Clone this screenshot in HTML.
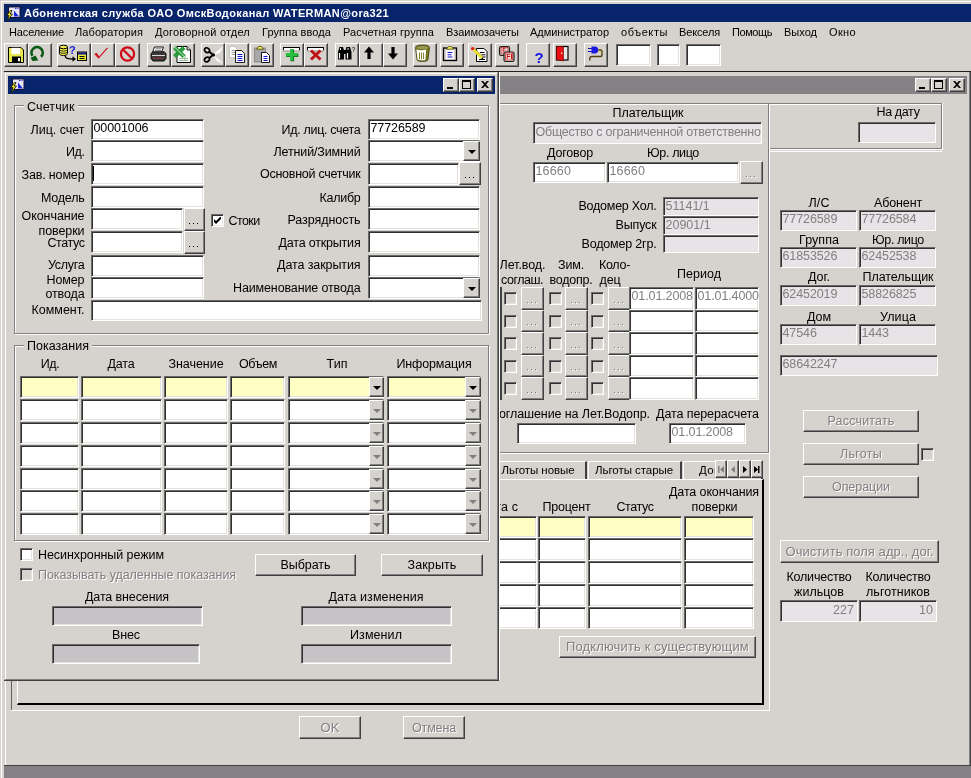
<!DOCTYPE html>
<html lang="ru"><head><meta charset="utf-8"><title>Абонентская служба</title>
<style>
html,body{margin:0;padding:0;background:#d6d3ce;}
#r{will-change:transform;position:relative;width:971px;height:778px;overflow:hidden;font-family:"Liberation Sans",sans-serif;font-size:12px;}
#r div,#r svg,#r span{position:absolute;box-sizing:border-box;}
#r span{white-space:nowrap;line-height:1;}
.sunk{border:1px solid;border-color:#6a6a6a #fff #fff #6a6a6a;box-shadow:inset 1px 1px 0 #303030, inset -1px -1px 0 #e4e2dc;}
.rais{border:1px solid;border-color:#fff #404040 #404040 #fff;box-shadow:inset -1px -1px 0 #808080, inset 1px 1px 0 #d6d3ce;}
.grp{border:1px solid #808080;box-shadow:inset 1px 1px 0 #fff, 1px 1px 0 #fff;}
.grp2{border:1px solid #fff;box-shadow:inset 1px 1px 0 #808080;border-right-color:#fff;}
</style></head>
<body><div id="r">
<div class="" style="left:0px;top:0px;width:971px;height:778px;background:#d6d3ce"></div>
<div class="" style="left:0px;top:0px;width:971px;height:1px;background:#d6d3ce"></div>
<div class="" style="left:1px;top:1px;width:970px;height:1px;background:#fff"></div>
<div class="" style="left:1px;top:1px;width:1px;height:777px;background:#fff"></div>
<div class="" style="left:4px;top:4px;width:967px;height:18px;background:#08246b"></div>
<span id="t1" style="left:24px;top:8px;font-size:11px;font-weight:700;color:#fff;letter-spacing:0.39px;">Абонентская служба ОАО ОмскВодоканал WATERMAN@ora321</span>
<span id="t2" style="left:9px;top:27px;font-size:11px;font-weight:400;color:#000;letter-spacing:-0.13px;">Население</span>
<span id="t3" style="left:75px;top:27px;font-size:11px;font-weight:400;color:#000;letter-spacing:0.09px;">Лаборатория</span>
<span id="t4" style="left:155px;top:27px;font-size:11px;font-weight:400;color:#000;letter-spacing:0.18px;">Договорной отдел</span>
<span id="t5" style="left:262px;top:27px;font-size:11px;font-weight:400;color:#000;letter-spacing:0.09px;">Группа ввода</span>
<span id="t6" style="left:343px;top:27px;font-size:11px;font-weight:400;color:#000;letter-spacing:0.08px;">Расчетная группа</span>
<span id="t7" style="left:446px;top:27px;font-size:11px;font-weight:400;color:#000;letter-spacing:-0.05px;">Взаимозачеты</span>
<span id="t8" style="left:530px;top:27px;font-size:11px;font-weight:400;color:#000;letter-spacing:-0.03px;">Администратор</span>
<span id="t9" style="left:621px;top:27px;font-size:11px;font-weight:400;color:#000;letter-spacing:0.58px;">объекты</span>
<span id="t10" style="left:679px;top:27px;font-size:11px;font-weight:400;color:#000;letter-spacing:-0.15px;">Векселя</span>
<span id="t11" style="left:732px;top:27px;font-size:11px;font-weight:400;color:#000;letter-spacing:-0.42px;">Помощь</span>
<span id="t12" style="left:784px;top:27px;font-size:11px;font-weight:400;color:#000;letter-spacing:0.02px;">Выход</span>
<span id="t13" style="left:829px;top:27px;font-size:11px;font-weight:400;color:#000;letter-spacing:0.36px;">Окно</span>
<div class="rais tbb" style="left:4px;top:43px;width:24px;height:24px;background:#d6d3ce"></div>
<div class="rais tbb" style="left:28px;top:43px;width:24px;height:24px;background:#d6d3ce"></div>
<div class="rais tbb" style="left:57px;top:43px;width:34px;height:24px;background:#d6d3ce"></div>
<div class="rais tbb" style="left:91px;top:43px;width:24px;height:24px;background:#d6d3ce"></div>
<div class="rais tbb" style="left:115px;top:43px;width:25px;height:24px;background:#d6d3ce"></div>
<div class="rais tbb" style="left:147px;top:43px;width:24px;height:24px;background:#d6d3ce"></div>
<div class="rais tbb" style="left:171px;top:43px;width:24px;height:24px;background:#d6d3ce"></div>
<div class="rais tbb" style="left:201px;top:43px;width:24px;height:24px;background:#d6d3ce"></div>
<div class="rais tbb" style="left:225px;top:43px;width:24px;height:24px;background:#d6d3ce"></div>
<div class="rais tbb" style="left:250px;top:43px;width:24px;height:24px;background:#d6d3ce"></div>
<div class="rais tbb" style="left:280px;top:43px;width:24px;height:24px;background:#d6d3ce"></div>
<div class="rais tbb" style="left:304px;top:43px;width:24px;height:24px;background:#d6d3ce"></div>
<div class="rais tbb" style="left:335px;top:43px;width:24px;height:24px;background:#d6d3ce"></div>
<div class="rais tbb" style="left:359px;top:43px;width:24px;height:24px;background:#d6d3ce"></div>
<div class="rais tbb" style="left:383px;top:43px;width:24px;height:24px;background:#d6d3ce"></div>
<div class="rais tbb" style="left:413px;top:43px;width:24px;height:24px;background:#d6d3ce"></div>
<div class="rais tbb" style="left:440px;top:43px;width:24px;height:24px;background:#d6d3ce"></div>
<div class="rais tbb" style="left:468px;top:43px;width:24px;height:24px;background:#d6d3ce"></div>
<div class="rais tbb" style="left:495px;top:43px;width:24px;height:24px;background:#d6d3ce"></div>
<div class="rais tbb" style="left:526px;top:43px;width:24px;height:24px;background:#d6d3ce"></div>
<div class="rais tbb" style="left:553px;top:43px;width:24px;height:24px;background:#d6d3ce"></div>
<div class="rais tbb" style="left:584px;top:43px;width:24px;height:24px;background:#d6d3ce"></div>
<div class="sunk" style="left:616px;top:44px;width:35px;height:22px;background:#fff"></div>
<div class="sunk" style="left:657px;top:44px;width:23px;height:22px;background:#fff"></div>
<div class="sunk" style="left:686px;top:44px;width:35px;height:22px;background:#fff"></div>
<div class="" style="left:4px;top:71px;width:967px;height:1px;background:#202020"></div>
<div class="" style="left:4px;top:765px;width:967px;height:13px;background:#848284"></div>
<div class="" style="left:4px;top:765px;width:967px;height:1px;background:#424142"></div>
<div class="" style="left:500px;top:76px;width:467px;height:18px;background:#848284"></div>
<div class="rais cap" style="left:915px;top:78px;width:16px;height:14px;background:#d6d3ce"></div>
<div class="" style="left:919px;top:87px;width:6px;height:2px;background:#000"></div>
<div class="rais cap" style="left:931px;top:78px;width:16px;height:14px;background:#d6d3ce"></div>
<div class="" style="left:934px;top:80px;width:9px;height:9px;border:1px solid #000;border-top:2px solid #000;box-sizing:border-box"></div>
<div class="rais cap" style="left:949px;top:78px;width:16px;height:14px;background:#d6d3ce"></div>
<svg style="left:953px;top:81px" width="8" height="7"><path d="M0 0h2l2 2l2-2h2l-3 3.5l3 3.5h-2l-2-2l-2 2h-2l3-3.5z" fill="#000"/></svg>
<div class="" style="left:5px;top:72px;width:1px;height:693px;background:#fff"></div>
<div class="" style="left:970px;top:72px;width:1px;height:694px;background:#424142"></div>
<div class="" style="left:969px;top:72px;width:1px;height:693px;background:#848284"></div>
<div class="grp" style="left:490px;top:103px;width:279px;height:350px;"></div>
<span id="t14" style="left:612.5px;top:107px;font-size:12.5px;font-weight:400;color:#000;letter-spacing:-0.06px;">Плательщик</span>
<div class="sunk" style="left:533px;top:122px;width:229px;height:22px;background:#e7e3e7"></div>
<span id="t15" style="left:535.5px;top:126px;font-size:12.5px;font-weight:400;color:#808080;letter-spacing:-0.24px;">Общество с ограниченной ответственно</span>
<span id="t16" style="left:547.0px;top:147px;font-size:12.5px;font-weight:400;color:#000;letter-spacing:-0.17px;">Договор</span>
<span id="t17" style="left:647.0px;top:147px;font-size:12.5px;font-weight:400;color:#000;letter-spacing:-0.35px;">Юр. лицо</span>
<div class="sunk" style="left:533px;top:162px;width:73px;height:21px;background:#fff"></div>
<span id="t18" style="left:535.5px;top:165px;font-size:12.5px;font-weight:400;color:#808080;letter-spacing:0.15px;">16660</span>
<div class="sunk" style="left:607px;top:162px;width:132px;height:21px;background:#fff"></div>
<span id="t19" style="left:609.5px;top:165px;font-size:12.5px;font-weight:400;color:#808080;letter-spacing:0.15px;">16660</span>
<div class="rais" style="left:740px;top:161px;width:23px;height:23px;background:#d6d3ce"></div>
<div class="" style="left:747px;top:177px;width:1px;height:1px;background:#fff"></div>
<div class="" style="left:746px;top:176px;width:1px;height:1px;background:#808080"></div>
<div class="" style="left:751px;top:177px;width:1px;height:1px;background:#fff"></div>
<div class="" style="left:750px;top:176px;width:1px;height:1px;background:#808080"></div>
<div class="" style="left:755px;top:177px;width:1px;height:1px;background:#fff"></div>
<div class="" style="left:754px;top:176px;width:1px;height:1px;background:#808080"></div>
<span id="t20" style="left:578.5px;top:200px;font-size:12.5px;font-weight:400;color:#000;letter-spacing:-0.24px;">Водомер Хол.</span>
<div class="sunk" style="left:663px;top:197px;width:96px;height:19px;background:#e7e3e7"></div>
<span id="t21" style="left:665.5px;top:200px;font-size:12.5px;font-weight:400;color:#808080;letter-spacing:0px;">51141/1</span>
<span id="t22" style="left:615.5px;top:219px;font-size:12.5px;font-weight:400;color:#000;letter-spacing:-0.15px;">Выпуск</span>
<div class="sunk" style="left:663px;top:216px;width:96px;height:19px;background:#e7e3e7"></div>
<span id="t23" style="left:665.5px;top:219px;font-size:12.5px;font-weight:400;color:#808080;letter-spacing:0px;">20901/1</span>
<span id="t24" style="left:581.5px;top:238px;font-size:12.5px;font-weight:400;color:#000;letter-spacing:-0.18px;">Водомер 2гр.</span>
<div class="sunk" style="left:663px;top:235px;width:96px;height:18px;background:#e7e3e7"></div>
<span id="t25" style="left:499.5px;top:259px;font-size:12.5px;font-weight:400;color:#000;letter-spacing:-0.06px;">Лет.вод.</span>
<span id="t26" style="left:501.0px;top:274px;font-size:12.5px;font-weight:400;color:#000;letter-spacing:-0.48px;">соглаш.</span>
<span id="t27" style="left:558.0px;top:259px;font-size:12.5px;font-weight:400;color:#000;letter-spacing:-0.15px;">Зим.</span>
<span id="t28" style="left:549.5px;top:274px;font-size:12.5px;font-weight:400;color:#000;letter-spacing:-0.23px;">водопр.</span>
<span id="t29" style="left:599.0px;top:259px;font-size:12.5px;font-weight:400;color:#000;letter-spacing:-0.3px;">Коло-</span>
<span id="t30" style="left:599.5px;top:274px;font-size:12.5px;font-weight:400;color:#000;letter-spacing:-0.14px;">дец</span>
<span id="t31" style="left:677.0px;top:268px;font-size:12.5px;font-weight:400;color:#000;letter-spacing:0.03px;">Период</span>
<div class="sunk" style="left:504px;top:292px;width:13px;height:13px;background:#d6d3ce"></div>
<div class="rais" style="left:521px;top:287px;width:23px;height:23px;background:#d6d3ce"></div>
<div class="" style="left:528px;top:303px;width:1px;height:1px;background:#fff"></div>
<div class="" style="left:527px;top:302px;width:1px;height:1px;background:#808080"></div>
<div class="" style="left:532px;top:303px;width:1px;height:1px;background:#fff"></div>
<div class="" style="left:531px;top:302px;width:1px;height:1px;background:#808080"></div>
<div class="" style="left:536px;top:303px;width:1px;height:1px;background:#fff"></div>
<div class="" style="left:535px;top:302px;width:1px;height:1px;background:#808080"></div>
<div class="sunk" style="left:549px;top:292px;width:13px;height:13px;background:#d6d3ce"></div>
<div class="rais" style="left:565px;top:287px;width:23px;height:23px;background:#d6d3ce"></div>
<div class="" style="left:572px;top:303px;width:1px;height:1px;background:#fff"></div>
<div class="" style="left:571px;top:302px;width:1px;height:1px;background:#808080"></div>
<div class="" style="left:576px;top:303px;width:1px;height:1px;background:#fff"></div>
<div class="" style="left:575px;top:302px;width:1px;height:1px;background:#808080"></div>
<div class="" style="left:580px;top:303px;width:1px;height:1px;background:#fff"></div>
<div class="" style="left:579px;top:302px;width:1px;height:1px;background:#808080"></div>
<div class="sunk" style="left:591px;top:292px;width:13px;height:13px;background:#d6d3ce"></div>
<div class="rais" style="left:608px;top:287px;width:23px;height:23px;background:#d6d3ce"></div>
<div class="" style="left:615px;top:303px;width:1px;height:1px;background:#fff"></div>
<div class="" style="left:614px;top:302px;width:1px;height:1px;background:#808080"></div>
<div class="" style="left:619px;top:303px;width:1px;height:1px;background:#fff"></div>
<div class="" style="left:618px;top:302px;width:1px;height:1px;background:#808080"></div>
<div class="" style="left:623px;top:303px;width:1px;height:1px;background:#fff"></div>
<div class="" style="left:622px;top:302px;width:1px;height:1px;background:#808080"></div>
<div class="sunk" style="left:629px;top:287px;width:65px;height:23px;background:#fff"></div>
<span id="t32" style="left:631.5px;top:290px;font-size:12.5px;font-weight:400;color:#808080;letter-spacing:-0.11px;">01.01.2008</span>
<div class="sunk" style="left:695px;top:287px;width:64px;height:23px;background:#fff"></div>
<span id="t33" style="left:697.5px;top:290px;font-size:12.5px;font-weight:400;color:#808080;letter-spacing:-0.11px;">01.01.4000</span>
<div class="sunk" style="left:504px;top:315px;width:13px;height:13px;background:#d6d3ce"></div>
<div class="rais" style="left:521px;top:310px;width:23px;height:22px;background:#d6d3ce"></div>
<div class="" style="left:528px;top:325px;width:1px;height:1px;background:#fff"></div>
<div class="" style="left:527px;top:324px;width:1px;height:1px;background:#808080"></div>
<div class="" style="left:532px;top:325px;width:1px;height:1px;background:#fff"></div>
<div class="" style="left:531px;top:324px;width:1px;height:1px;background:#808080"></div>
<div class="" style="left:536px;top:325px;width:1px;height:1px;background:#fff"></div>
<div class="" style="left:535px;top:324px;width:1px;height:1px;background:#808080"></div>
<div class="sunk" style="left:549px;top:315px;width:13px;height:13px;background:#d6d3ce"></div>
<div class="rais" style="left:565px;top:310px;width:23px;height:22px;background:#d6d3ce"></div>
<div class="" style="left:572px;top:325px;width:1px;height:1px;background:#fff"></div>
<div class="" style="left:571px;top:324px;width:1px;height:1px;background:#808080"></div>
<div class="" style="left:576px;top:325px;width:1px;height:1px;background:#fff"></div>
<div class="" style="left:575px;top:324px;width:1px;height:1px;background:#808080"></div>
<div class="" style="left:580px;top:325px;width:1px;height:1px;background:#fff"></div>
<div class="" style="left:579px;top:324px;width:1px;height:1px;background:#808080"></div>
<div class="sunk" style="left:591px;top:315px;width:13px;height:13px;background:#d6d3ce"></div>
<div class="rais" style="left:608px;top:310px;width:23px;height:22px;background:#d6d3ce"></div>
<div class="" style="left:615px;top:325px;width:1px;height:1px;background:#fff"></div>
<div class="" style="left:614px;top:324px;width:1px;height:1px;background:#808080"></div>
<div class="" style="left:619px;top:325px;width:1px;height:1px;background:#fff"></div>
<div class="" style="left:618px;top:324px;width:1px;height:1px;background:#808080"></div>
<div class="" style="left:623px;top:325px;width:1px;height:1px;background:#fff"></div>
<div class="" style="left:622px;top:324px;width:1px;height:1px;background:#808080"></div>
<div class="sunk" style="left:629px;top:310px;width:65px;height:22px;background:#fff"></div>
<div class="sunk" style="left:695px;top:310px;width:64px;height:22px;background:#fff"></div>
<div class="sunk" style="left:504px;top:337px;width:13px;height:13px;background:#d6d3ce"></div>
<div class="rais" style="left:521px;top:332px;width:23px;height:23px;background:#d6d3ce"></div>
<div class="" style="left:528px;top:348px;width:1px;height:1px;background:#fff"></div>
<div class="" style="left:527px;top:347px;width:1px;height:1px;background:#808080"></div>
<div class="" style="left:532px;top:348px;width:1px;height:1px;background:#fff"></div>
<div class="" style="left:531px;top:347px;width:1px;height:1px;background:#808080"></div>
<div class="" style="left:536px;top:348px;width:1px;height:1px;background:#fff"></div>
<div class="" style="left:535px;top:347px;width:1px;height:1px;background:#808080"></div>
<div class="sunk" style="left:549px;top:337px;width:13px;height:13px;background:#d6d3ce"></div>
<div class="rais" style="left:565px;top:332px;width:23px;height:23px;background:#d6d3ce"></div>
<div class="" style="left:572px;top:348px;width:1px;height:1px;background:#fff"></div>
<div class="" style="left:571px;top:347px;width:1px;height:1px;background:#808080"></div>
<div class="" style="left:576px;top:348px;width:1px;height:1px;background:#fff"></div>
<div class="" style="left:575px;top:347px;width:1px;height:1px;background:#808080"></div>
<div class="" style="left:580px;top:348px;width:1px;height:1px;background:#fff"></div>
<div class="" style="left:579px;top:347px;width:1px;height:1px;background:#808080"></div>
<div class="sunk" style="left:591px;top:337px;width:13px;height:13px;background:#d6d3ce"></div>
<div class="rais" style="left:608px;top:332px;width:23px;height:23px;background:#d6d3ce"></div>
<div class="" style="left:615px;top:348px;width:1px;height:1px;background:#fff"></div>
<div class="" style="left:614px;top:347px;width:1px;height:1px;background:#808080"></div>
<div class="" style="left:619px;top:348px;width:1px;height:1px;background:#fff"></div>
<div class="" style="left:618px;top:347px;width:1px;height:1px;background:#808080"></div>
<div class="" style="left:623px;top:348px;width:1px;height:1px;background:#fff"></div>
<div class="" style="left:622px;top:347px;width:1px;height:1px;background:#808080"></div>
<div class="sunk" style="left:629px;top:332px;width:65px;height:23px;background:#fff"></div>
<div class="sunk" style="left:695px;top:332px;width:64px;height:23px;background:#fff"></div>
<div class="sunk" style="left:504px;top:360px;width:13px;height:13px;background:#d6d3ce"></div>
<div class="rais" style="left:521px;top:355px;width:23px;height:22px;background:#d6d3ce"></div>
<div class="" style="left:528px;top:370px;width:1px;height:1px;background:#fff"></div>
<div class="" style="left:527px;top:369px;width:1px;height:1px;background:#808080"></div>
<div class="" style="left:532px;top:370px;width:1px;height:1px;background:#fff"></div>
<div class="" style="left:531px;top:369px;width:1px;height:1px;background:#808080"></div>
<div class="" style="left:536px;top:370px;width:1px;height:1px;background:#fff"></div>
<div class="" style="left:535px;top:369px;width:1px;height:1px;background:#808080"></div>
<div class="sunk" style="left:549px;top:360px;width:13px;height:13px;background:#d6d3ce"></div>
<div class="rais" style="left:565px;top:355px;width:23px;height:22px;background:#d6d3ce"></div>
<div class="" style="left:572px;top:370px;width:1px;height:1px;background:#fff"></div>
<div class="" style="left:571px;top:369px;width:1px;height:1px;background:#808080"></div>
<div class="" style="left:576px;top:370px;width:1px;height:1px;background:#fff"></div>
<div class="" style="left:575px;top:369px;width:1px;height:1px;background:#808080"></div>
<div class="" style="left:580px;top:370px;width:1px;height:1px;background:#fff"></div>
<div class="" style="left:579px;top:369px;width:1px;height:1px;background:#808080"></div>
<div class="sunk" style="left:591px;top:360px;width:13px;height:13px;background:#d6d3ce"></div>
<div class="rais" style="left:608px;top:355px;width:23px;height:22px;background:#d6d3ce"></div>
<div class="" style="left:615px;top:370px;width:1px;height:1px;background:#fff"></div>
<div class="" style="left:614px;top:369px;width:1px;height:1px;background:#808080"></div>
<div class="" style="left:619px;top:370px;width:1px;height:1px;background:#fff"></div>
<div class="" style="left:618px;top:369px;width:1px;height:1px;background:#808080"></div>
<div class="" style="left:623px;top:370px;width:1px;height:1px;background:#fff"></div>
<div class="" style="left:622px;top:369px;width:1px;height:1px;background:#808080"></div>
<div class="sunk" style="left:629px;top:355px;width:65px;height:22px;background:#fff"></div>
<div class="sunk" style="left:695px;top:355px;width:64px;height:22px;background:#fff"></div>
<div class="sunk" style="left:504px;top:382px;width:13px;height:13px;background:#d6d3ce"></div>
<div class="rais" style="left:521px;top:377px;width:23px;height:23px;background:#d6d3ce"></div>
<div class="" style="left:528px;top:393px;width:1px;height:1px;background:#fff"></div>
<div class="" style="left:527px;top:392px;width:1px;height:1px;background:#808080"></div>
<div class="" style="left:532px;top:393px;width:1px;height:1px;background:#fff"></div>
<div class="" style="left:531px;top:392px;width:1px;height:1px;background:#808080"></div>
<div class="" style="left:536px;top:393px;width:1px;height:1px;background:#fff"></div>
<div class="" style="left:535px;top:392px;width:1px;height:1px;background:#808080"></div>
<div class="sunk" style="left:549px;top:382px;width:13px;height:13px;background:#d6d3ce"></div>
<div class="rais" style="left:565px;top:377px;width:23px;height:23px;background:#d6d3ce"></div>
<div class="" style="left:572px;top:393px;width:1px;height:1px;background:#fff"></div>
<div class="" style="left:571px;top:392px;width:1px;height:1px;background:#808080"></div>
<div class="" style="left:576px;top:393px;width:1px;height:1px;background:#fff"></div>
<div class="" style="left:575px;top:392px;width:1px;height:1px;background:#808080"></div>
<div class="" style="left:580px;top:393px;width:1px;height:1px;background:#fff"></div>
<div class="" style="left:579px;top:392px;width:1px;height:1px;background:#808080"></div>
<div class="sunk" style="left:591px;top:382px;width:13px;height:13px;background:#d6d3ce"></div>
<div class="rais" style="left:608px;top:377px;width:23px;height:23px;background:#d6d3ce"></div>
<div class="" style="left:615px;top:393px;width:1px;height:1px;background:#fff"></div>
<div class="" style="left:614px;top:392px;width:1px;height:1px;background:#808080"></div>
<div class="" style="left:619px;top:393px;width:1px;height:1px;background:#fff"></div>
<div class="" style="left:618px;top:392px;width:1px;height:1px;background:#808080"></div>
<div class="" style="left:623px;top:393px;width:1px;height:1px;background:#fff"></div>
<div class="" style="left:622px;top:392px;width:1px;height:1px;background:#808080"></div>
<div class="sunk" style="left:629px;top:377px;width:65px;height:23px;background:#fff"></div>
<div class="sunk" style="left:695px;top:377px;width:64px;height:23px;background:#fff"></div>
<div class="" style="left:500px;top:287px;width:2px;height:113px;background:#404040"></div>
<span id="t34" style="left:490px;top:408px;font-size:12.5px;font-weight:400;color:#000;letter-spacing:-0.09px;">Соглашение на Лет.Водопр.</span>
<span id="t35" style="left:656px;top:408px;font-size:12.5px;font-weight:400;color:#000;letter-spacing:-0.09px;">Дата перерасчета</span>
<div class="sunk" style="left:517px;top:423px;width:119px;height:21px;background:#fff"></div>
<div class="sunk" style="left:669px;top:423px;width:77px;height:21px;background:#fff"></div>
<span id="t36" style="left:671.5px;top:426px;font-size:12.5px;font-weight:400;color:#808080;letter-spacing:-0.11px;">01.01.2008</span>
<div class="" style="left:17px;top:479px;width:747px;height:226px;border:1px solid #fff;border-right:2px solid #000;border-bottom:2px solid #000;box-sizing:border-box"></div>
<div class="" style="left:491px;top:461px;width:96px;height:18px;background:#d6d3ce;border-top:1px solid #fff;border-left:1px solid #fff;border-right:2px solid #404040;box-sizing:border-box"></div>
<span id="t37" style="left:501.5px;top:465px;font-size:11.5px;font-weight:400;color:#000;letter-spacing:-0.07px;">Льготы новые</span>
<div class="" style="left:588px;top:461px;width:94px;height:18px;background:#d6d3ce;border-top:1px solid #fff;border-left:1px solid #fff;border-right:2px solid #404040;box-sizing:border-box"></div>
<span id="t38" style="left:595.0px;top:465px;font-size:11.5px;font-weight:400;color:#000;letter-spacing:-0.05px;">Льготы старые</span>
<div class="" style="left:683px;top:461px;width:80px;height:18px;background:#d6d3ce;border-top:1px solid #fff;border-left:1px solid #fff;border-right:2px solid #404040;box-sizing:border-box"></div>
<span id="t39" style="left:699.0px;top:465px;font-size:11.5px;font-weight:400;color:#000;letter-spacing:0.37px;">Договор</span>
<div class="rais nav" style="left:715px;top:460px;width:12px;height:18px;background:#d6d3ce"></div>
<div class="rais nav" style="left:727px;top:460px;width:12px;height:18px;background:#d6d3ce"></div>
<div class="rais nav" style="left:739px;top:460px;width:12px;height:18px;background:#d6d3ce"></div>
<div class="rais nav" style="left:751px;top:460px;width:12px;height:18px;background:#d6d3ce"></div>
<svg style="left:715px;top:461px" width="48" height="17"><g fill="#808080"><path d="M3 5h1.5v7H3zM9 5v7L5 8.5z"/><path d="M20 5v7L16 8.5z"/></g><g fill="#000"><path d="M28 5v7L32 8.5z"/><path d="M39 5v7L43 8.5zM43 5h1.5v7H43z"/></g></svg>
<span id="t40" style="left:669.0px;top:486px;font-size:12.5px;font-weight:400;color:#000;letter-spacing:-0.12px;">Дата окончания</span>
<span id="t41" style="left:691.5px;top:501px;font-size:12.5px;font-weight:400;color:#000;letter-spacing:-0.08px;">поверки</span>
<span id="t42" style="left:480px;top:501px;font-size:12.5px;font-weight:400;color:#000;letter-spacing:0.1px;">Дата с</span>
<span id="t43" style="left:542.5px;top:501px;font-size:12.5px;font-weight:400;color:#000;letter-spacing:-0.21px;">Процент</span>
<span id="t44" style="left:616.5px;top:501px;font-size:12.5px;font-weight:400;color:#000;letter-spacing:-0.42px;">Статус</span>
<div class="sunk" style="left:440px;top:516px;width:97px;height:22px;background:#ffffc4"></div>
<div class="sunk" style="left:538px;top:516px;width:48px;height:22px;background:#ffffc4"></div>
<div class="sunk" style="left:588px;top:516px;width:94px;height:22px;background:#ffffc4"></div>
<div class="sunk" style="left:684px;top:516px;width:70px;height:22px;background:#ffffc4"></div>
<div class="sunk" style="left:440px;top:538px;width:97px;height:23px;background:#fff"></div>
<div class="sunk" style="left:538px;top:538px;width:48px;height:23px;background:#fff"></div>
<div class="sunk" style="left:588px;top:538px;width:94px;height:23px;background:#fff"></div>
<div class="sunk" style="left:684px;top:538px;width:70px;height:23px;background:#fff"></div>
<div class="sunk" style="left:440px;top:561px;width:97px;height:23px;background:#fff"></div>
<div class="sunk" style="left:538px;top:561px;width:48px;height:23px;background:#fff"></div>
<div class="sunk" style="left:588px;top:561px;width:94px;height:23px;background:#fff"></div>
<div class="sunk" style="left:684px;top:561px;width:70px;height:23px;background:#fff"></div>
<div class="sunk" style="left:440px;top:584px;width:97px;height:23px;background:#fff"></div>
<div class="sunk" style="left:538px;top:584px;width:48px;height:23px;background:#fff"></div>
<div class="sunk" style="left:588px;top:584px;width:94px;height:23px;background:#fff"></div>
<div class="sunk" style="left:684px;top:584px;width:70px;height:23px;background:#fff"></div>
<div class="sunk" style="left:440px;top:607px;width:97px;height:22px;background:#fff"></div>
<div class="sunk" style="left:538px;top:607px;width:48px;height:22px;background:#fff"></div>
<div class="sunk" style="left:588px;top:607px;width:94px;height:22px;background:#fff"></div>
<div class="sunk" style="left:684px;top:607px;width:70px;height:22px;background:#fff"></div>
<div class="rais" style="left:559px;top:636px;width:197px;height:22px;background:#d6d3ce"></div>
<span id="t45" style="left:566.0px;top:640.0px;font-size:13px;font-weight:400;color:#808080;letter-spacing:0.14px;text-shadow:1px 1px 0 #fff;">Подключить к существующим</span>
<div class="" style="left:11px;top:710px;width:759px;height:1px;background:#fff"></div>
<div class="" style="left:11px;top:680px;width:1px;height:30px;background:#606060"></div>
<div class="rais" style="left:299px;top:716px;width:62px;height:23px;background:#d6d3ce"></div>
<span id="t46" style="left:320.5px;top:720.5px;font-size:13px;font-weight:400;color:#808080;letter-spacing:0.1px;text-shadow:1px 1px 0 #fff;">OK</span>
<div class="rais" style="left:403px;top:716px;width:62px;height:23px;background:#d6d3ce"></div>
<span id="t47" style="left:412.0px;top:721.5px;font-size:12.5px;font-weight:400;color:#808080;letter-spacing:-0.14px;text-shadow:1px 1px 0 #fff;">Отмена</span>
<div class="" style="left:769px;top:103px;width:173px;height:1px;background:#808080"></div>
<div class="" style="left:769px;top:104px;width:174px;height:1px;background:#fff"></div>
<div class="" style="left:941px;top:104px;width:1px;height:45px;background:#808080"></div>
<div class="" style="left:942px;top:103px;width:1px;height:47px;background:#fff"></div>
<div class="" style="left:770px;top:148px;width:172px;height:1px;background:#808080"></div>
<div class="" style="left:769px;top:149px;width:174px;height:1px;background:#fff"></div>
<div class="" style="left:770px;top:151px;width:172px;height:1px;background:#fff"></div>
<div class="" style="left:769px;top:104px;width:1px;height:607px;background:#fff"></div>
<span id="t48" style="left:876.5px;top:106px;font-size:12.5px;font-weight:400;color:#000;letter-spacing:-0.36px;">На дату</span>
<div class="sunk" style="left:858px;top:122px;width:78px;height:21px;background:#e7e3e7"></div>
<span id="t49" style="left:808.5px;top:197px;font-size:12.5px;font-weight:400;color:#000;letter-spacing:0.1px;">Л/С</span>
<span id="t50" style="left:874.0px;top:197px;font-size:12.5px;font-weight:400;color:#000;letter-spacing:-0.13px;">Абонент</span>
<div class="sunk" style="left:780px;top:210px;width:77px;height:21px;background:#e7e3e7"></div>
<span id="t51" style="left:782.5px;top:213px;font-size:12.5px;font-weight:400;color:#808080;letter-spacing:-0.1px;">77726589</span>
<div class="sunk" style="left:859px;top:210px;width:77px;height:21px;background:#e7e3e7"></div>
<span id="t52" style="left:861.5px;top:213px;font-size:12.5px;font-weight:400;color:#808080;letter-spacing:-0.1px;">77726584</span>
<span id="t53" style="left:799.0px;top:234px;font-size:12.5px;font-weight:400;color:#000;letter-spacing:0.06px;">Группа</span>
<span id="t54" style="left:872.0px;top:234px;font-size:12.5px;font-weight:400;color:#000;letter-spacing:-0.35px;">Юр. лицо</span>
<div class="sunk" style="left:780px;top:247px;width:77px;height:21px;background:#e7e3e7"></div>
<span id="t55" style="left:782.5px;top:250px;font-size:12.5px;font-weight:400;color:#808080;letter-spacing:-0.1px;">61853526</span>
<div class="sunk" style="left:859px;top:247px;width:77px;height:21px;background:#e7e3e7"></div>
<span id="t56" style="left:861.5px;top:250px;font-size:12.5px;font-weight:400;color:#808080;letter-spacing:-0.1px;">62452538</span>
<span id="t57" style="left:808.0px;top:271px;font-size:12.5px;font-weight:400;color:#000;letter-spacing:-0.02px;">Дог.</span>
<span id="t58" style="left:862.5px;top:271px;font-size:12.5px;font-weight:400;color:#000;letter-spacing:-0.06px;">Плательщик</span>
<div class="sunk" style="left:780px;top:285px;width:77px;height:21px;background:#e7e3e7"></div>
<span id="t59" style="left:782.5px;top:288px;font-size:12.5px;font-weight:400;color:#808080;letter-spacing:-0.1px;">62452019</span>
<div class="sunk" style="left:859px;top:285px;width:77px;height:21px;background:#e7e3e7"></div>
<span id="t60" style="left:861.5px;top:288px;font-size:12.5px;font-weight:400;color:#808080;letter-spacing:-0.1px;">58826825</span>
<span id="t61" style="left:807.0px;top:311px;font-size:12.5px;font-weight:400;color:#000;letter-spacing:-0.05px;">Дом</span>
<span id="t62" style="left:880.0px;top:311px;font-size:12.5px;font-weight:400;color:#000;letter-spacing:0.1px;">Улица</span>
<div class="sunk" style="left:780px;top:324px;width:77px;height:21px;background:#e7e3e7"></div>
<span id="t63" style="left:782.5px;top:327px;font-size:12.5px;font-weight:400;color:#808080;letter-spacing:-0.1px;">47546</span>
<div class="sunk" style="left:859px;top:324px;width:77px;height:21px;background:#e7e3e7"></div>
<span id="t64" style="left:861.5px;top:327px;font-size:12.5px;font-weight:400;color:#808080;letter-spacing:-0.1px;">1443</span>
<div class="sunk" style="left:780px;top:355px;width:158px;height:21px;background:#e7e3e7"></div>
<span id="t65" style="left:782.5px;top:358px;font-size:12.5px;font-weight:400;color:#808080;letter-spacing:-0.08px;">68642247</span>
<div class="rais" style="left:803px;top:410px;width:116px;height:22px;background:#d6d3ce"></div>
<span id="t66" style="left:827.5px;top:415.0px;font-size:12.5px;font-weight:400;color:#808080;letter-spacing:0.18px;text-shadow:1px 1px 0 #fff;">Рассчитать</span>
<div class="rais" style="left:803px;top:443px;width:116px;height:22px;background:#d6d3ce"></div>
<span id="t67" style="left:840.0px;top:448.0px;font-size:12.5px;font-weight:400;color:#808080;letter-spacing:0.27px;text-shadow:1px 1px 0 #fff;">Льготы</span>
<div class="sunk" style="left:921px;top:448px;width:13px;height:13px;background:#d6d3ce"></div>
<div class="rais" style="left:803px;top:476px;width:116px;height:22px;background:#d6d3ce"></div>
<span id="t68" style="left:832.0px;top:481.0px;font-size:12.5px;font-weight:400;color:#808080;letter-spacing:-0.06px;text-shadow:1px 1px 0 #fff;">Операции</span>
<div class="rais" style="left:780px;top:540px;width:159px;height:23px;background:#d6d3ce"></div>
<span id="t69" style="left:785.5px;top:544.5px;font-size:13px;font-weight:400;color:#808080;letter-spacing:0.05px;text-shadow:1px 1px 0 #fff;">Очистить поля адр., дог.</span>
<span id="t70" style="left:786.5px;top:571px;font-size:12.5px;font-weight:400;color:#000;letter-spacing:-0.21px;">Количество</span>
<span id="t71" style="left:794.0px;top:586px;font-size:12.5px;font-weight:400;color:#000;letter-spacing:0.03px;">жильцов</span>
<span id="t72" style="left:865.5px;top:571px;font-size:12.5px;font-weight:400;color:#000;letter-spacing:-0.21px;">Количество</span>
<span id="t73" style="left:866.0px;top:586px;font-size:12.5px;font-weight:400;color:#000;letter-spacing:0.04px;">льготников</span>
<div class="sunk" style="left:780px;top:600px;width:78px;height:22px;background:#e7e3e7"></div>
<span id="t74" style="left:833.1px;top:604px;font-size:12.5px;font-weight:400;color:#808080;letter-spacing:0px;">227</span>
<div class="sunk" style="left:859px;top:600px;width:78px;height:22px;background:#e7e3e7"></div>
<span id="t75" style="left:919.1px;top:604px;font-size:12.5px;font-weight:400;color:#808080;letter-spacing:0px;">10</span>
<div class="" style="left:4px;top:72px;width:495px;height:609px;background:#d6d3ce"></div>
<div class="" style="left:4px;top:72px;width:494px;height:1px;background:#d6d3ce"></div>
<div class="" style="left:5px;top:73px;width:492px;height:1px;background:#fff"></div>
<div class="" style="left:5px;top:73px;width:1px;height:606px;background:#fff"></div>
<div class="" style="left:498px;top:72px;width:1px;height:609px;background:#404040"></div>
<div class="" style="left:497px;top:73px;width:1px;height:607px;background:#808080"></div>
<div class="" style="left:4px;top:680px;width:495px;height:1px;background:#404040"></div>
<div class="" style="left:5px;top:679px;width:493px;height:1px;background:#808080"></div>
<div class="" style="left:499px;top:72px;width:1px;height:608px;background:#fff"></div>
<div class="" style="left:8px;top:76px;width:487px;height:18px;background:#08246b"></div>
<div class="rais cap" style="left:443px;top:78px;width:16px;height:14px;background:#d6d3ce"></div>
<div class="" style="left:447px;top:87px;width:6px;height:2px;background:#000"></div>
<div class="rais cap" style="left:459px;top:78px;width:16px;height:14px;background:#d6d3ce"></div>
<div class="" style="left:462px;top:80px;width:9px;height:9px;border:1px solid #000;border-top:2px solid #000;box-sizing:border-box"></div>
<div class="rais cap" style="left:477px;top:78px;width:16px;height:14px;background:#d6d3ce"></div>
<svg style="left:481px;top:81px" width="8" height="7"><path d="M0 0h2l2 2l2-2h2l-3 3.5l3 3.5h-2l-2-2l-2 2h-2l3-3.5z" fill="#000"/></svg>
<div class="grp" style="left:14px;top:105px;width:475px;height:229px;"></div>
<div class="" style="left:24px;top:103px;width:53.5px;height:5px;background:#d6d3ce"></div>
<span id="t76" style="left:27px;top:101px;font-size:12.5px;font-weight:400;color:#000;letter-spacing:0.12px;">Счетчик</span>
<span id="t77" style="left:30.5px;top:124px;font-size:12.5px;font-weight:400;color:#000;letter-spacing:-0.02px;">Лиц. счет</span>
<span id="t78" style="left:66.0px;top:146px;font-size:12.5px;font-weight:400;color:#000;letter-spacing:-0.42px;">Ид.</span>
<span id="t79" style="left:21.5px;top:169px;font-size:12.5px;font-weight:400;color:#000;letter-spacing:-0.15px;">Зав. номер</span>
<span id="t80" style="left:41.0px;top:192px;font-size:12.5px;font-weight:400;color:#000;letter-spacing:-0.23px;">Модель</span>
<span id="t81" style="left:21.5px;top:210px;font-size:12.5px;font-weight:400;color:#000;letter-spacing:-0.06px;">Окончание</span>
<span id="t82" style="left:38.5px;top:225px;font-size:12.5px;font-weight:400;color:#000;letter-spacing:-0.08px;">поверки</span>
<span id="t83" style="left:47.5px;top:237px;font-size:12.5px;font-weight:400;color:#000;letter-spacing:-0.42px;">Статус</span>
<span id="t84" style="left:48.0px;top:259px;font-size:12.5px;font-weight:400;color:#000;letter-spacing:-0.27px;">Услуга</span>
<span id="t85" style="left:46.5px;top:274px;font-size:12.5px;font-weight:400;color:#000;letter-spacing:-0.1px;">Номер</span>
<span id="t86" style="left:45.5px;top:288px;font-size:12.5px;font-weight:400;color:#000;letter-spacing:-0.14px;">отвода</span>
<span id="t87" style="left:31.5px;top:304px;font-size:12.5px;font-weight:400;color:#000;letter-spacing:-0.01px;">Коммент.</span>
<div class="sunk" style="left:91px;top:119px;width:113px;height:21px;background:#fff"></div>
<span id="t88" style="left:93.5px;top:122px;font-size:12.5px;font-weight:400;color:#000;letter-spacing:-0.08px;">00001006</span>
<div class="sunk" style="left:91px;top:140px;width:113px;height:22px;background:#fff"></div>
<div class="sunk" style="left:91px;top:163px;width:113px;height:22px;background:#fff"></div>
<div class="sunk" style="left:91px;top:186px;width:113px;height:22px;background:#fff"></div>
<div class="sunk" style="left:91px;top:255px;width:113px;height:22px;background:#fff"></div>
<div class="sunk" style="left:91px;top:277px;width:113px;height:22px;background:#fff"></div>
<div class="" style="left:93px;top:166px;width:1px;height:15px;background:#000"></div>
<div class="sunk" style="left:91px;top:208px;width:92px;height:22px;background:#fff"></div>
<div class="rais" style="left:184px;top:208px;width:21px;height:23px;background:#d6d3ce"></div>
<div class="" style="left:189px;top:223px;width:1px;height:1px;background:#000"></div>
<div class="" style="left:193px;top:223px;width:1px;height:1px;background:#000"></div>
<div class="" style="left:197px;top:223px;width:1px;height:1px;background:#000"></div>
<div class="sunk" style="left:91px;top:231px;width:92px;height:22px;background:#fff"></div>
<div class="rais" style="left:184px;top:231px;width:21px;height:23px;background:#d6d3ce"></div>
<div class="" style="left:189px;top:246px;width:1px;height:1px;background:#000"></div>
<div class="" style="left:193px;top:246px;width:1px;height:1px;background:#000"></div>
<div class="" style="left:197px;top:246px;width:1px;height:1px;background:#000"></div>
<div class="sunk" style="left:91px;top:300px;width:391px;height:21px;background:#fff"></div>
<div class="sunk" style="left:211px;top:214px;width:13px;height:13px;background:#fff"></div>
<svg style="left:214px;top:217px" width="7" height="7"><path d="M0 2v3l2 2l5-5v-3l-5 5z" fill="#000"/></svg>
<span id="t89" style="left:228.6px;top:215px;font-size:12.5px;font-weight:400;color:#000;letter-spacing:-0.6px;">Стоки</span>
<span id="t90" style="left:281.5px;top:124px;font-size:12.5px;font-weight:400;color:#000;letter-spacing:-0.31px;">Ид. лиц. счета</span>
<span id="t91" style="left:273.5px;top:146px;font-size:12.5px;font-weight:400;color:#000;letter-spacing:-0.14px;">Летний/Зимний</span>
<span id="t92" style="left:260.0px;top:168px;font-size:12.5px;font-weight:400;color:#000;letter-spacing:-0.26px;">Основной счетчик</span>
<span id="t93" style="left:319.5px;top:192px;font-size:12.5px;font-weight:400;color:#000;letter-spacing:-0.27px;">Калибр</span>
<span id="t94" style="left:287.5px;top:214px;font-size:12.5px;font-weight:400;color:#000;letter-spacing:-0.06px;">Разрядность</span>
<span id="t95" style="left:278.5px;top:237px;font-size:12.5px;font-weight:400;color:#000;letter-spacing:-0.19px;">Дата открытия</span>
<span id="t96" style="left:277.0px;top:259px;font-size:12.5px;font-weight:400;color:#000;letter-spacing:-0.09px;">Дата закрытия</span>
<span id="t97" style="left:233.0px;top:282px;font-size:12.5px;font-weight:400;color:#000;letter-spacing:-0.13px;">Наименование отвода</span>
<div class="sunk" style="left:368px;top:119px;width:112px;height:21px;background:#fff"></div>
<span id="t98" style="left:370.5px;top:122px;font-size:12.5px;font-weight:400;color:#000;letter-spacing:-0.08px;">77726589</span>
<div class="sunk" style="left:368px;top:140px;width:112px;height:22px;background:#fff"></div>
<div class="rais" style="left:463px;top:141px;width:17px;height:20px;background:#d6d3ce"></div>
<svg style="left:467.5px;top:149.5px" width="8" height="4"><path d="M0 0H8L4 4Z" fill="#000"/></svg>
<div class="sunk" style="left:368px;top:163px;width:91px;height:22px;background:#fff"></div>
<div class="rais" style="left:459px;top:162px;width:22px;height:23px;background:#d6d3ce"></div>
<div class="" style="left:465px;top:177px;width:1px;height:1px;background:#000"></div>
<div class="" style="left:469px;top:177px;width:1px;height:1px;background:#000"></div>
<div class="" style="left:473px;top:177px;width:1px;height:1px;background:#000"></div>
<div class="sunk" style="left:368px;top:186px;width:112px;height:22px;background:#fff"></div>
<div class="sunk" style="left:368px;top:208px;width:112px;height:22px;background:#fff"></div>
<div class="sunk" style="left:368px;top:231px;width:112px;height:22px;background:#fff"></div>
<div class="sunk" style="left:368px;top:255px;width:112px;height:22px;background:#fff"></div>
<div class="sunk" style="left:368px;top:277px;width:112px;height:22px;background:#fff"></div>
<div class="rais" style="left:463px;top:278px;width:17px;height:20px;background:#d6d3ce"></div>
<svg style="left:467.5px;top:286.5px" width="8" height="4"><path d="M0 0H8L4 4Z" fill="#000"/></svg>
<div class="grp" style="left:14px;top:345px;width:475px;height:196px;"></div>
<div class="" style="left:24px;top:343px;width:68px;height:5px;background:#d6d3ce"></div>
<span id="t99" style="left:27px;top:340px;font-size:12.5px;font-weight:400;color:#000;letter-spacing:0.02px;">Показания</span>
<span id="t100" style="left:40.8px;top:358px;font-size:12.5px;font-weight:400;color:#000;letter-spacing:-0.42px;">Ид.</span>
<span id="t101" style="left:107.5px;top:358px;font-size:12.5px;font-weight:400;color:#000;letter-spacing:-0.17px;">Дата</span>
<span id="t102" style="left:168.5px;top:358px;font-size:12.5px;font-weight:400;color:#000;letter-spacing:-0.05px;">Значение</span>
<span id="t103" style="left:239.0px;top:358px;font-size:12.5px;font-weight:400;color:#000;letter-spacing:-0.37px;">Объем</span>
<span id="t104" style="left:326.5px;top:358px;font-size:12.5px;font-weight:400;color:#000;letter-spacing:0.05px;">Тип</span>
<span id="t105" style="left:396.5px;top:358px;font-size:12.5px;font-weight:400;color:#000;letter-spacing:-0.15px;">Информация</span>
<div class="sunk" style="left:20px;top:376px;width:59px;height:22px;background:#ffffc4"></div>
<div class="sunk" style="left:81px;top:376px;width:81px;height:22px;background:#ffffc4"></div>
<div class="sunk" style="left:164px;top:376px;width:64px;height:22px;background:#ffffc4"></div>
<div class="sunk" style="left:230px;top:376px;width:55px;height:22px;background:#ffffc4"></div>
<div class="sunk" style="left:288px;top:376px;width:96px;height:22px;background:#ffffc4"></div>
<div class="rais" style="left:369px;top:377px;width:15px;height:20px;background:#d6d3ce"></div>
<svg style="left:372.5px;top:385.5px" width="8" height="4"><path d="M0 0H8L4 4Z" fill="#000"/></svg>
<div class="sunk" style="left:387px;top:376px;width:94px;height:22px;background:#ffffc4"></div>
<div class="rais" style="left:465px;top:377px;width:16px;height:20px;background:#d6d3ce"></div>
<svg style="left:469.0px;top:385.5px" width="8" height="4"><path d="M0 0H8L4 4Z" fill="#000"/></svg>
<div class="sunk" style="left:20px;top:399px;width:59px;height:22px;background:#fff"></div>
<div class="sunk" style="left:81px;top:399px;width:81px;height:22px;background:#fff"></div>
<div class="sunk" style="left:164px;top:399px;width:64px;height:22px;background:#fff"></div>
<div class="sunk" style="left:230px;top:399px;width:55px;height:22px;background:#fff"></div>
<div class="sunk" style="left:288px;top:399px;width:96px;height:22px;background:#fff"></div>
<div class="rais" style="left:369px;top:400px;width:15px;height:20px;background:#d6d3ce"></div>
<svg style="left:372.5px;top:408.5px" width="8" height="4"><path d="M0 0H8L4 4Z" fill="#808080"/></svg>
<div class="sunk" style="left:387px;top:399px;width:94px;height:22px;background:#fff"></div>
<div class="rais" style="left:465px;top:400px;width:16px;height:20px;background:#d6d3ce"></div>
<svg style="left:469.0px;top:408.5px" width="8" height="4"><path d="M0 0H8L4 4Z" fill="#808080"/></svg>
<div class="sunk" style="left:20px;top:422px;width:59px;height:22px;background:#fff"></div>
<div class="sunk" style="left:81px;top:422px;width:81px;height:22px;background:#fff"></div>
<div class="sunk" style="left:164px;top:422px;width:64px;height:22px;background:#fff"></div>
<div class="sunk" style="left:230px;top:422px;width:55px;height:22px;background:#fff"></div>
<div class="sunk" style="left:288px;top:422px;width:96px;height:22px;background:#fff"></div>
<div class="rais" style="left:369px;top:423px;width:15px;height:20px;background:#d6d3ce"></div>
<svg style="left:372.5px;top:431.5px" width="8" height="4"><path d="M0 0H8L4 4Z" fill="#808080"/></svg>
<div class="sunk" style="left:387px;top:422px;width:94px;height:22px;background:#fff"></div>
<div class="rais" style="left:465px;top:423px;width:16px;height:20px;background:#d6d3ce"></div>
<svg style="left:469.0px;top:431.5px" width="8" height="4"><path d="M0 0H8L4 4Z" fill="#808080"/></svg>
<div class="sunk" style="left:20px;top:445px;width:59px;height:22px;background:#fff"></div>
<div class="sunk" style="left:81px;top:445px;width:81px;height:22px;background:#fff"></div>
<div class="sunk" style="left:164px;top:445px;width:64px;height:22px;background:#fff"></div>
<div class="sunk" style="left:230px;top:445px;width:55px;height:22px;background:#fff"></div>
<div class="sunk" style="left:288px;top:445px;width:96px;height:22px;background:#fff"></div>
<div class="rais" style="left:369px;top:446px;width:15px;height:20px;background:#d6d3ce"></div>
<svg style="left:372.5px;top:454.5px" width="8" height="4"><path d="M0 0H8L4 4Z" fill="#808080"/></svg>
<div class="sunk" style="left:387px;top:445px;width:94px;height:22px;background:#fff"></div>
<div class="rais" style="left:465px;top:446px;width:16px;height:20px;background:#d6d3ce"></div>
<svg style="left:469.0px;top:454.5px" width="8" height="4"><path d="M0 0H8L4 4Z" fill="#808080"/></svg>
<div class="sunk" style="left:20px;top:468px;width:59px;height:22px;background:#fff"></div>
<div class="sunk" style="left:81px;top:468px;width:81px;height:22px;background:#fff"></div>
<div class="sunk" style="left:164px;top:468px;width:64px;height:22px;background:#fff"></div>
<div class="sunk" style="left:230px;top:468px;width:55px;height:22px;background:#fff"></div>
<div class="sunk" style="left:288px;top:468px;width:96px;height:22px;background:#fff"></div>
<div class="rais" style="left:369px;top:469px;width:15px;height:20px;background:#d6d3ce"></div>
<svg style="left:372.5px;top:477.5px" width="8" height="4"><path d="M0 0H8L4 4Z" fill="#808080"/></svg>
<div class="sunk" style="left:387px;top:468px;width:94px;height:22px;background:#fff"></div>
<div class="rais" style="left:465px;top:469px;width:16px;height:20px;background:#d6d3ce"></div>
<svg style="left:469.0px;top:477.5px" width="8" height="4"><path d="M0 0H8L4 4Z" fill="#808080"/></svg>
<div class="sunk" style="left:20px;top:490px;width:59px;height:22px;background:#fff"></div>
<div class="sunk" style="left:81px;top:490px;width:81px;height:22px;background:#fff"></div>
<div class="sunk" style="left:164px;top:490px;width:64px;height:22px;background:#fff"></div>
<div class="sunk" style="left:230px;top:490px;width:55px;height:22px;background:#fff"></div>
<div class="sunk" style="left:288px;top:490px;width:96px;height:22px;background:#fff"></div>
<div class="rais" style="left:369px;top:491px;width:15px;height:20px;background:#d6d3ce"></div>
<svg style="left:372.5px;top:499.5px" width="8" height="4"><path d="M0 0H8L4 4Z" fill="#808080"/></svg>
<div class="sunk" style="left:387px;top:490px;width:94px;height:22px;background:#fff"></div>
<div class="rais" style="left:465px;top:491px;width:16px;height:20px;background:#d6d3ce"></div>
<svg style="left:469.0px;top:499.5px" width="8" height="4"><path d="M0 0H8L4 4Z" fill="#808080"/></svg>
<div class="sunk" style="left:20px;top:513px;width:59px;height:22px;background:#fff"></div>
<div class="sunk" style="left:81px;top:513px;width:81px;height:22px;background:#fff"></div>
<div class="sunk" style="left:164px;top:513px;width:64px;height:22px;background:#fff"></div>
<div class="sunk" style="left:230px;top:513px;width:55px;height:22px;background:#fff"></div>
<div class="sunk" style="left:288px;top:513px;width:96px;height:22px;background:#fff"></div>
<div class="rais" style="left:369px;top:514px;width:15px;height:20px;background:#d6d3ce"></div>
<svg style="left:372.5px;top:522.5px" width="8" height="4"><path d="M0 0H8L4 4Z" fill="#808080"/></svg>
<div class="sunk" style="left:387px;top:513px;width:94px;height:22px;background:#fff"></div>
<div class="rais" style="left:465px;top:514px;width:16px;height:20px;background:#d6d3ce"></div>
<svg style="left:469.0px;top:522.5px" width="8" height="4"><path d="M0 0H8L4 4Z" fill="#808080"/></svg>
<div class="sunk" style="left:20px;top:548px;width:13px;height:13px;background:#fff"></div>
<span id="t106" style="left:38px;top:549px;font-size:12.5px;font-weight:400;color:#000;letter-spacing:-0.07px;">Несинхронный режим</span>
<div class="sunk" style="left:20px;top:568px;width:13px;height:13px;background:#d6d3ce"></div>
<span id="t107" style="left:38px;top:569px;font-size:12.5px;font-weight:400;color:#808080;letter-spacing:-0.04px;text-shadow:1px 1px 0 #fff;">Показывать удаленные показания</span>
<div class="rais" style="left:255px;top:554px;width:101px;height:22px;background:#d6d3ce"></div>
<span id="t108" style="left:280.5px;top:559.0px;font-size:12.5px;font-weight:400;color:#000;letter-spacing:-0.05px;">Выбрать</span>
<div class="rais" style="left:381px;top:554px;width:102px;height:22px;background:#d6d3ce"></div>
<span id="t109" style="left:407.5px;top:559.0px;font-size:12.5px;font-weight:400;color:#000;letter-spacing:0.12px;">Закрыть</span>
<span id="t110" style="left:85.0px;top:591px;font-size:12.5px;font-weight:400;color:#000;letter-spacing:-0.12px;">Дата внесения</span>
<div class="sunk" style="left:52px;top:606px;width:151px;height:20px;background:#c6c3c6"></div>
<span id="t111" style="left:112.0px;top:629px;font-size:12.5px;font-weight:400;color:#000;letter-spacing:-0.11px;">Внес</span>
<div class="sunk" style="left:52px;top:644px;width:148px;height:20px;background:#c6c3c6"></div>
<span id="t112" style="left:328.5px;top:591px;font-size:12.5px;font-weight:400;color:#000;letter-spacing:0.08px;">Дата изменения</span>
<div class="sunk" style="left:301px;top:606px;width:151px;height:20px;background:#c6c3c6"></div>
<span id="t113" style="left:350.0px;top:629px;font-size:12.5px;font-weight:400;color:#000;letter-spacing:0.08px;">Изменил</span>
<div class="sunk" style="left:301px;top:644px;width:151px;height:20px;background:#c6c3c6"></div>
<svg style="left:6px;top:6px" width="16" height="16" viewBox="0 0 16 16"><rect x="2.500" y="1" width="11.500" height="10.500" fill="#e8e4f8" stroke="#101030" stroke-width="1"/><path d="M8 4.500L13 10.500H8Z" fill="#1a28d8"/><path d="M9 2.500l1.500 0M11.500 2.500l1 0" stroke="#2030c0" stroke-width="1"/><path d="M4.500 4.500L0.800 9.500H3L1.500 14.800L6.500 8H4L6 4.500Z" fill="#f4f020" stroke="#202000" stroke-width="0.900"/></svg>
<svg style="left:10px;top:78px" width="16" height="16" viewBox="0 0 16 16"><rect x="2.500" y="1" width="11.500" height="10.500" fill="#e8e4f8" stroke="#101030" stroke-width="1"/><path d="M8 4.500L13 10.500H8Z" fill="#1a28d8"/><path d="M9 2.500l1.500 0M11.500 2.500l1 0" stroke="#2030c0" stroke-width="1"/><path d="M4.500 4.500L0.800 9.500H3L1.500 14.800L6.500 8H4L6 4.500Z" fill="#f4f020" stroke="#202000" stroke-width="0.900"/></svg>
<svg style="left:8px;top:47px" width="16" height="16" viewBox="0 0 16 16"><path d="M0.5 0.5H13L15.5 3V15.5H0.5Z" fill="#e6e650" stroke="#000"/><rect x="3.5" y="0.8" width="8.5" height="6.2" fill="#fff"/><rect x="4" y="9.5" width="9" height="5.8" fill="#000"/><rect x="10" y="11" width="2" height="3.2" fill="#fff"/></svg>
<svg style="left:30px;top:45px" width="20" height="20" viewBox="0 0 20 20"><path d="M11 11.700A5.600 5.600 0 1 0 2.500 10.800" fill="none" stroke="#0a5a14" stroke-width="2.700"/><path d="M0.600 12.800L5.600 10.600L8.200 15.400L2.400 15.900Z" fill="#0a5a14"/></svg>
<svg style="left:58px;top:44px" width="32" height="20" viewBox="0 0 32 20"><path d="M1.5 3v6.5c0 1.3 1.8 2 4 2s4-.7 4-2V3" fill="#f0ec50" stroke="#000"/><ellipse cx="5.5" cy="3" rx="4" ry="1.8" fill="#f0ec50" stroke="#000"/><path d="M1.5 5.2c0 1.2 1.8 1.9 4 1.9s4-.7 4-1.9M1.5 7.4c0 1.2 1.8 1.9 4 1.9s4-.7 4-1.9" fill="none" stroke="#000" stroke-width=".8"/><path d="M7 11.5c.5 3 2.500 3.500 9 3.500" fill="none" stroke="#000" stroke-width="1.4"/><path d="M14.5 12.300L18 15L14.500 17.700Z" fill="#000"/><text x="11" y="9.5" font-family="Liberation Sans,sans-serif" font-size="11" font-weight="700" fill="#2020d0">?</text><rect x="19.500" y="8" width="9" height="8.500" fill="#f0ec30" stroke="#000"/><rect x="20" y="8.500" width="8" height="2" fill="#1010a0"/><path d="M21.500 12.500h5M21.500 14.500h5" stroke="#000" stroke-width="1"/></svg>
<svg style="left:93px;top:46px" width="18" height="16" viewBox="0 0 18 16"><path d="M5.500 12.200L14.400 1.800" fill="none" stroke="#d01020" stroke-width="1.100"/><path d="M1.200 8L3.800 6.800L6.200 10.500L5.600 12.800Z" fill="#d01020"/></svg>
<svg style="left:119px;top:45px" width="18" height="18" viewBox="0 0 18 18"><circle cx="8.500" cy="9" r="6.600" fill="none" stroke="#d00818" stroke-width="2.200"/><path d="M4 4.500L13 13.500" stroke="#d00818" stroke-width="2.200"/></svg>
<svg style="left:150px;top:46px" width="18" height="17" viewBox="0 0 18 17"><path d="M4.500 1H13.500L11.500 6.500H2.500Z" fill="#fff" stroke="#000" stroke-width=".9"/><path d="M5.500 2.800h6M5 4.600h6" stroke="#555" stroke-width=".8"/><path d="M1 7.500L3 5.800H14L16 7.500V12.500L14 15H3L1 12.500Z" fill="#3a3a3a" stroke="#000" stroke-width=".9"/><path d="M2 9.500h13" stroke="#d8d8d8" stroke-width="1"/><path d="M3 12.200h10" stroke="#a03030" stroke-width="1"/></svg>
<svg style="left:172px;top:45px" width="22" height="19" viewBox="0 0 22 19"><path d="M5 1.500H15L18.500 5V17.500H5Z" fill="#fff" stroke="#000"/><path d="M15 1.500V5H18.500" fill="#d6d3ce" stroke="#000" stroke-width=".9"/><path d="M7 13.500h9M7 15.500h9M13 9v7" stroke="#9ab89a" stroke-width="1"/><path d="M2.500 2.500L12 11.500M12 2.500L2.500 11.500" stroke="#2a9a3a" stroke-width="4.200"/><path d="M2.500 2L12.500 11.800" stroke="#c8f0c8" stroke-width="1"/></svg>
<svg style="left:203px;top:46px" width="20" height="18" viewBox="0 0 20 18"><path d="M9 9.800L19.500 1L17 6.500Z" fill="#fff" stroke="#f4f4f4" stroke-width=".8"/><path d="M9 8.200L19.500 17L14.500 15.200Z" fill="#fff" stroke="#f4f4f4" stroke-width=".8"/><ellipse cx="4" cy="4.200" rx="2.600" ry="2.200" fill="none" stroke="#000" stroke-width="1.700" transform="rotate(35 4 4.200)"/><ellipse cx="4" cy="13.500" rx="2.600" ry="2.200" fill="none" stroke="#000" stroke-width="1.700" transform="rotate(-35 4 13.500)"/><path d="M6 5.500L11.500 10M6 12.200L11.500 7.800" stroke="#000" stroke-width="1.900"/></svg>
<svg style="left:228px;top:46px" width="19" height="18" viewBox="0 0 19 18"><path d="M1.5 0.5H6.5L9.5 3.5V11.5H1.5Z" fill="#fff" stroke="#c0c0c0" stroke-width=".9"/><path d="M3.5 4.5H7.5" stroke="#a0a0a0" stroke-width="1"/><path d="M3.5 6.5H7.5" stroke="#a0a0a0" stroke-width="1"/><path d="M3.5 8.5H7.5" stroke="#a0a0a0" stroke-width="1"/><path d="M7.5 4.5H13.5L16.5 7.5V16.5H7.5Z" fill="#fff" stroke="#000" stroke-width=".9"/><path d="M9.5 8.5H14.5" stroke="#1818d0" stroke-width="1"/><path d="M9.5 10.5H14.5" stroke="#1818d0" stroke-width="1"/><path d="M9.5 12.5H14.5" stroke="#1818d0" stroke-width="1"/><path d="M9.5 14.5H14.5" stroke="#1818d0" stroke-width="1"/></svg>
<svg style="left:253px;top:45px" width="19" height="19" viewBox="0 0 19 19"><rect x="1.500" y="3" width="11" height="14" fill="#a8a8a8" stroke="#808080" stroke-width=".8"/><path d="M3.500 4.200L5.500 1.500H8.500L10.500 4.200Z" fill="#f0f060" stroke="#404000" stroke-width=".8"/><path d="M8.5 7.5H13.5L16.5 10.5V17.5H8.5Z" fill="#fff" stroke="#000" stroke-width=".9"/><path d="M10.5 11.5H14.5" stroke="#1818d0" stroke-width="1"/><path d="M10.5 13.5H14.5" stroke="#1818d0" stroke-width="1"/><path d="M10.5 15.5H14.5" stroke="#1818d0" stroke-width="1"/></svg>
<svg style="left:282px;top:46px" width="20" height="18" viewBox="0 0 20 18"><rect x="1.500" y="1.500" width="16" height="3.500" fill="#fff" stroke="#000" stroke-width="1"/><rect x="1" y="4.200" width="17" height="1.500" fill="#d6d3ce"/><path d="M8.500 3.500h3.600v4h4.200v3.600h-4.200v4.200H8.500v-4.200H4.200V7.500h4.300Z" fill="#0a6a1a"/><path d="M8 3h3.200v4h4.200v3.200h-4.200v4.200H8v-4.200H3.800V7H8Z" fill="#28c040"/></svg>
<svg style="left:306px;top:46px" width="20" height="18" viewBox="0 0 20 18"><rect x="1.500" y="1.500" width="16" height="3.500" fill="#fff" stroke="#000" stroke-width="1"/><rect x="1" y="4.200" width="17" height="1.500" fill="#d6d3ce"/><path d="M5 4.500L14.500 13.500M14.500 4.500L5 13.500" stroke="#c01018" stroke-width="3"/></svg>
<svg style="left:337px;top:45px" width="20" height="17" viewBox="0 0 20 17"><path d="M2.500 2h3.500l1 3.500v9H1V7Z" fill="#000"/><path d="M9.500 2H13l1.500 5v7.500H8.500V5.500Z" fill="#000"/><rect x="6.500" y="5" width="2.500" height="4" fill="#000"/><path d="M2.500 8v5.500M10.500 8v5.500" stroke="#fff" stroke-width="1.200"/><path d="M3.500 3v2M11 3v2" stroke="#fff" stroke-width=".9"/><text x="14.500" y="6.500" font-family="Liberation Sans,sans-serif" font-size="7" fill="#000">?</text></svg>
<svg style="left:362px;top:45px" width="14" height="16" viewBox="0 0 14 16"><path d="M7 1.500L12 7.500H8.600V14H5.400V7.500H2Z" fill="#000"/></svg>
<svg style="left:386px;top:45px" width="14" height="16" viewBox="0 0 14 16"><path d="M7 14.500L12 8.500H8.600V2H5.400V8.500H2Z" fill="#000"/></svg>
<svg style="left:414px;top:44px" width="18" height="19" viewBox="0 0 18 19"><path d="M1.500 3.500C1.500 1.800 5 1 8.500 1s7 .8 7 2.500L14 15.500c0 1.300-2.500 2-5.500 2s-5.500-.7-5.500-2Z" fill="#74741c" stroke="#3a3a08" stroke-width=".8"/><ellipse cx="8.500" cy="3.600" rx="5.800" ry="1.700" fill="#9a9a58"/><path d="M2.300 5.200C5 6.500 9.500 6.500 12.200 5.600L11.400 16C8.500 16.800 5.500 16.500 3.500 15.300Z" fill="#fff"/><path d="M5.500 8.500v6.500M7.500 8.500v7M9.500 8.500v6.500" stroke="#74741c" stroke-width=".9"/></svg>
<svg style="left:442px;top:45px" width="17" height="17" viewBox="0 0 17 17"><rect x="1.500" y="3" width="13" height="12.500" fill="#d6d3ce" stroke="#000" stroke-width="1.300"/><rect x="4" y="5" width="8" height="9" fill="#fff"/><path d="M5.500 7.500h5M5.500 9.800h4M5.500 12h5" stroke="#1818d0" stroke-width="1"/><path d="M4.500 4.200L6.500 1.500H9.500L11.500 4.200Z" fill="#f0f060" stroke="#404000" stroke-width=".7"/></svg>
<svg style="left:470px;top:46px" width="20" height="17" viewBox="0 0 20 17"><path d="M6.500 2.500H14L17 5.500V15.500H6.500Z" fill="#fff" stroke="#000" stroke-width="1"/><path d="M10 6.500h4.500M11.500 8.800h4M12.500 11h3M9 13.500h6" stroke="#000" stroke-width="1"/><path d="M2.500 2.500L12 12" stroke="#e8e030" stroke-width="2.800"/><path d="M2.500 2.500L12 12" stroke="#806000" stroke-width=".5" transform="translate(1.200 -1.200)"/><circle cx="2.600" cy="2.600" r="1.700" fill="#e02020"/><path d="M11 13L13.500 13.800L12.800 11.200Z" fill="#000"/></svg>
<svg style="left:498px;top:45px" width="18" height="18" viewBox="0 0 18 18"><rect x="1.500" y="1.500" width="10" height="9" rx="1.500" fill="#d6d3ce" stroke="#202020" stroke-width="1.200"/><rect x="3" y="2.500" width="7" height="6.500" fill="#e8c8c8" stroke="#c02020" stroke-width=".7"/><rect x="6" y="7" width="10" height="9.500" rx="1.500" fill="#d6d3ce" stroke="#202020" stroke-width="1.200"/><rect x="7.500" y="8" width="7" height="7" fill="#f0e0e0" stroke="#c02020" stroke-width=".7"/><text x="8.200" y="14.300" font-family="Liberation Sans,sans-serif" font-size="7" font-weight="700" fill="#d01010">FI</text><text x="4.500" y="7" font-family="Liberation Sans,sans-serif" font-size="5" font-weight="700" fill="#d01010">F</text></svg>
<span style="left:534.5px;top:49.5px;font-size:15px;font-weight:700;color:#1414e0;line-height:1">?</span>
<svg style="left:555px;top:45px" width="15" height="17" viewBox="0 0 15 17"><rect x="1.500" y="1.500" width="11.500" height="13.500" fill="#e8e8e8" stroke="#000" stroke-width="1.200"/><path d="M1.500 1.500H8.500V16L1.500 14.500Z" fill="#e81010" stroke="#600000" stroke-width=".6"/><rect x="6.200" y="7.500" width="1" height="1.500" fill="#fff"/></svg>
<svg style="left:587px;top:45px" width="18" height="18" viewBox="0 0 18 18"><path d="M1 3.500h4M1 6.500h4" stroke="#1010c0" stroke-width="1.200"/><path d="M4.500 1.500h3.500c2 0 3.200 1.500 3.200 3.500s-1.200 3.500-3.200 3.500H4.500Z" fill="#1818e0"/><path d="M11 5h2.200c1.200 0 1.800.8 1.800 2v3c0 1-.6 1.500-1.500 1.500H5c-1.500 0-2.200.8-2.200 2V15.500" fill="none" stroke="#504010" stroke-width="1.400"/><path d="M11 6.200h2c.8 0 1 .5 1 1.200" fill="none" stroke="#e8d040" stroke-width=".8"/></svg>
</div></body></html>
